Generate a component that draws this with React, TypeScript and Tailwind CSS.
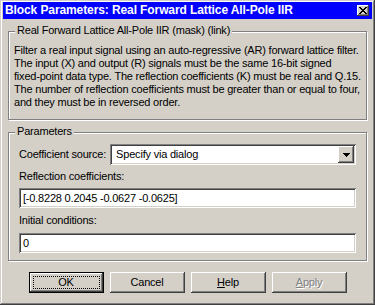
import React from 'react';

const raised =
  'shadow-[inset_-1px_-1px_#404040,inset_1px_1px_#ffffff,inset_-2px_-2px_#808080,inset_2px_2px_#d4d0c8]';
const sunken =
  'shadow-[inset_1px_1px_#808080,inset_-1px_-1px_#ffffff,inset_2px_2px_#404040,inset_-2px_-2px_#d4d0c8]';

function GroupBox({ title, className, children }: { title: string; className: string; children: React.ReactNode }) {
  return (
    <div className={`relative border border-[#808080] shadow-[1px_1px_0_#ffffff,inset_1px_1px_0_#ffffff] ${className}`}>
      <span className="absolute -top-[8px] left-[6px] bg-[#d4d0c8] px-[2px] leading-[13px]">{title}</span>
      {children}
    </div>
  );
}

function Button({ children, isDefault, disabled }: { children: React.ReactNode; isDefault?: boolean; disabled?: boolean }) {
  if (isDefault) {
    return (
      <div className="relative h-[21px] w-[75px] border border-black">
        <div className={`flex h-full w-full items-center justify-center ${raised}`}>{children}</div>
        <div className="absolute inset-[3px] border border-dotted border-black" />
      </div>
    );
  }
  return (
    <div
      className={`flex h-[21px] w-[75px] items-center justify-center ${raised} ${
        disabled ? 'text-[#808080] [text-shadow:1px_1px_0_#ffffff]' : ''
      }`}
    >
      {children}
    </div>
  );
}

export default function App() {
  return (
    <div
      className="flex h-[305px] w-[375px] flex-col bg-[#d4d0c8] px-[3px] pt-[2px] font-['Liberation_Sans',Arial,sans-serif] text-[11px] leading-[13px] tracking-[-0.2px] text-black shadow-[inset_-1px_-1px_#404040,inset_1px_1px_#d4d0c8,inset_-2px_-2px_#808080,inset_2px_2px_#ffffff]"
    >
      {/* title bar */}
      <div className="flex h-[17px] items-center justify-between bg-[#0000ff] pl-[2px] pr-[3px]">
        <span className="text-[12px] font-bold tracking-[-0.1px] text-white">
          Block Parameters: Real Forward Lattice All-Pole IIR
        </span>
        <div className={`flex h-[11px] w-[12px] items-center justify-center bg-[#d4d0c8] ${raised}`}>
          <svg width="8" height="7" viewBox="0 0 8 7" shapeRendering="crispEdges">
            <path d="M0 0h2v1h-2z M6 0h2v1h-2z M1 1h2v1h-2z M5 1h2v1h-2z M2 2h4v1h-4z M3 3h2v1h-2z M2 4h4v1h-4z M1 5h2v1h-2z M5 5h2v1h-2z M0 6h2v1h-2z M6 6h2v1h-2z" fill="#000" />
          </svg>
        </div>
      </div>

      <div className="flex flex-col px-[5px]">
        <GroupBox title="Real Forward Lattice All-Pole IIR (mask) (link)" className="mt-[12px] h-[89px] px-[5px] pt-[12px]">
          <p>Filter a real input signal using an auto-regressive (AR) forward lattice filter.</p>
          <p>The input (X) and output (R) signals must be the same 16-bit signed</p>
          <p>fixed-point data type. The reflection coefficients (K) must be real and Q.15.</p>
          <p>The number of reflection coefficients must be greater than or equal to four,</p>
          <p>and they must be in reversed order.</p>
        </GroupBox>

        <GroupBox title="Parameters" className="mt-[12px] h-[129px] px-[10px] pt-[11px]">
          <div className="flex items-center gap-[4px]">
            <span className="whitespace-nowrap">Coefficient source:</span>
            <div className={`flex h-[21px] flex-1 items-center justify-between bg-white pl-[6px] pr-[2px] ${sunken}`}>
              <span>Specify via dialog</span>
              <div className={`flex h-[17px] w-[16px] items-center justify-center bg-[#d4d0c8] ${raised}`}>
                <svg width="7" height="4" viewBox="0 0 7 4" shapeRendering="crispEdges">
                  <path d="M0 0h7v1h-7z M1 1h5v1h-5z M2 2h3v1h-3z M3 3h1v1h-1z" fill="#000" />
                </svg>
              </div>
            </div>
          </div>

          <div className="mt-[5px]">Reflection coefficients:</div>
          <div className={`mt-[5px] flex h-[20px] items-center bg-white pl-[4px] ${sunken}`}>
            [-0.8228 0.2045 -0.0627 -0.0625]
          </div>

          <div className="mt-[6px]">Initial conditions:</div>
          <div className={`mt-[6px] flex h-[20px] items-center bg-white pl-[4px] ${sunken}`}>0</div>
        </GroupBox>

        <div className="mt-[11px] flex justify-center gap-[6px]">
          <Button isDefault>OK</Button>
          <Button>Cancel</Button>
          <Button>
            <span>
              <span className="underline">H</span>elp
            </span>
          </Button>
          <Button disabled>
            <span>
              <span className="underline">A</span>pply
            </span>
          </Button>
        </div>
      </div>
    </div>
  );
}
